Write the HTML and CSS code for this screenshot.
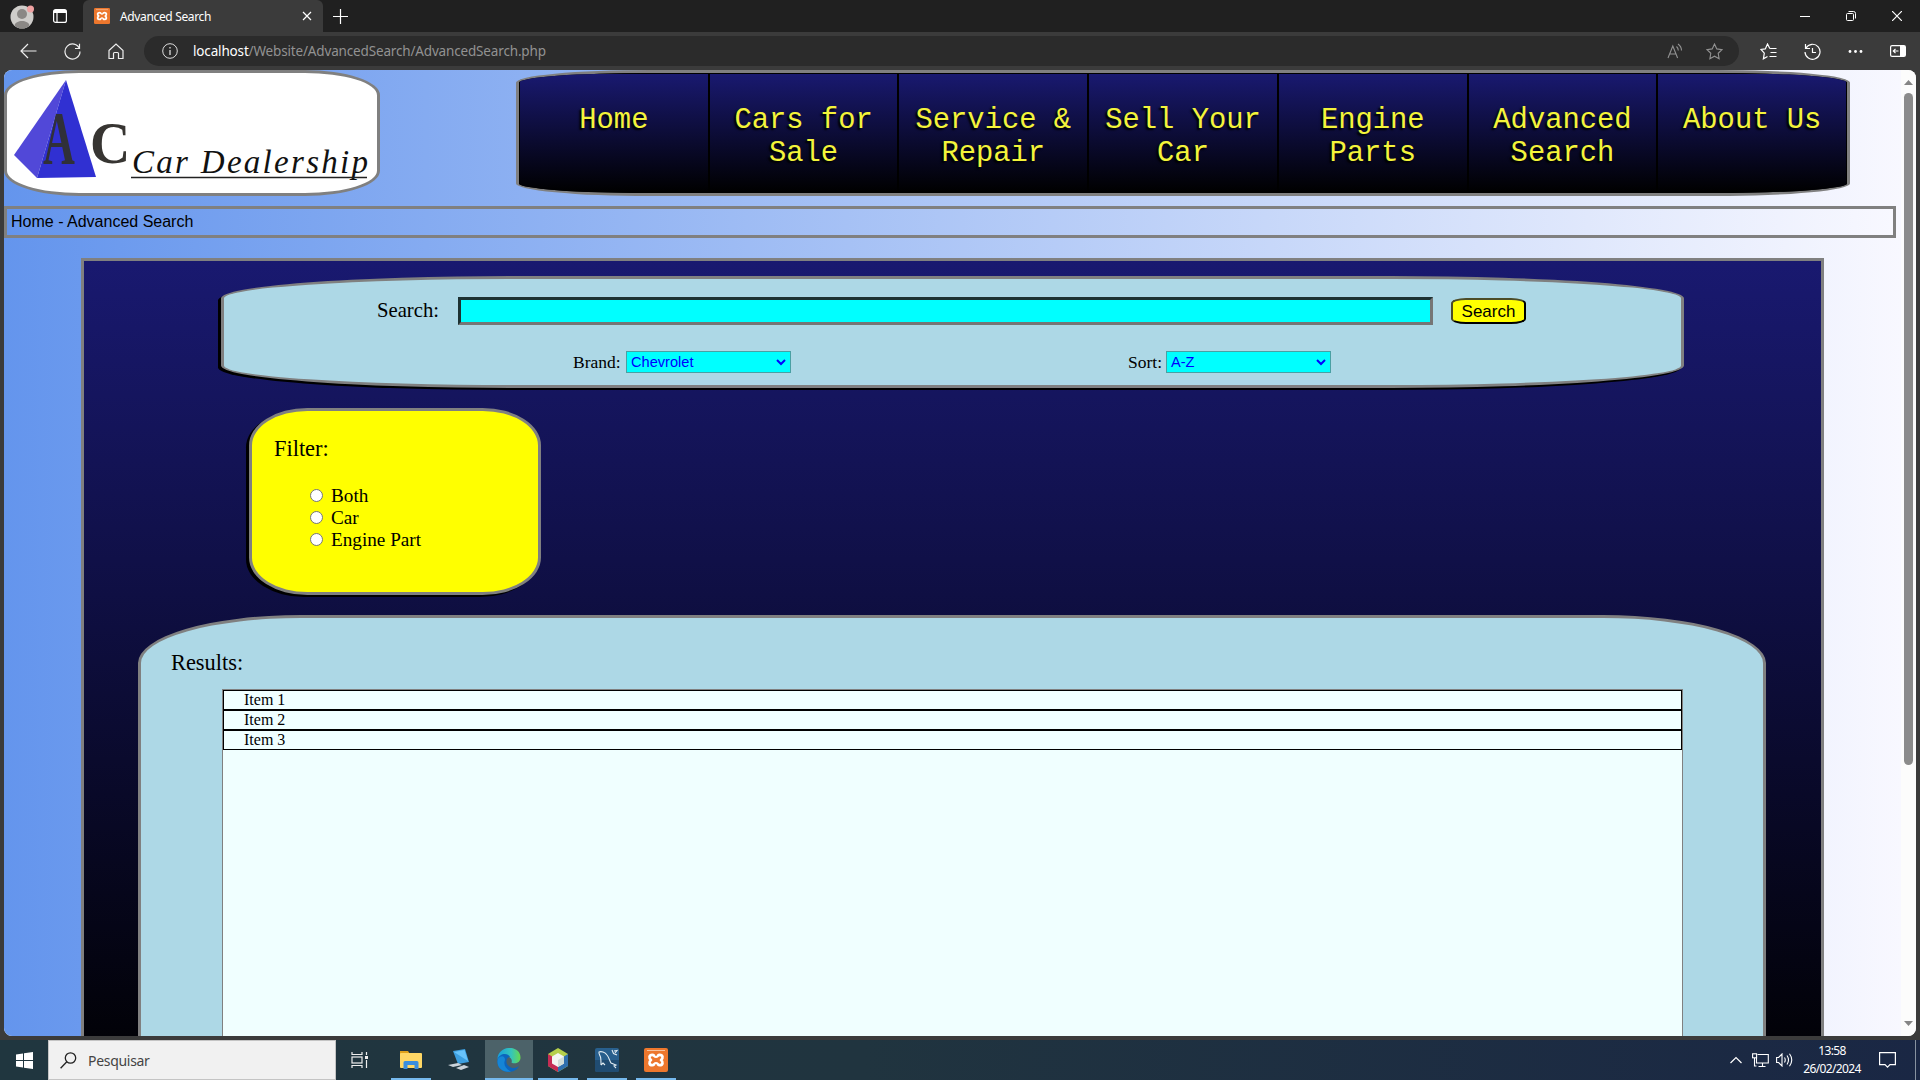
FILE: index.html
```html
<!DOCTYPE html>
<html lang="en">
<head>
<meta charset="utf-8">
<title>Advanced Search</title>
<link rel="stylesheet" href="styles.css">
</head>
<body>
<svg class="defs" width="0" height="0">
  <symbol id="xampp" viewBox="0 0 24 24">
    <rect width="24" height="24" rx="2" fill="#ed772d"/>
    <path d="M3 2.500h18" stroke="#f7c39d" stroke-width="1"/>
    <path d="M8.300 6.800c-3.200 0-3.800 3.200-1.300 5.200-2.500 2-1.900 5.200 1.300 5.200 1.900 0 1.900-1.900 3.700-1.900s1.800 1.900 3.700 1.900c3.200 0 3.800-3.200 1.300-5.200 2.500-2 1.900-5.200-1.300-5.200-1.900 0-1.900 1.900-3.700 1.900s-1.800-1.900-3.700-1.900z" fill="none" stroke="#fff" stroke-width="2.700" stroke-linejoin="round"/>
    <path d="M12 5v3M12 16v3" stroke="#ed772d" stroke-width="1.200"/>
  </symbol>
</svg>

<div class="tabbar">
  <svg class="avatar" width="24" height="28" viewBox="0 0 24 28"><circle cx="12" cy="14" r="11.500" fill="#cfcdca"/><circle cx="12" cy="11" r="5" fill="#8b8885"/><path d="M4.500 22.500c1-6 14-6 15 0-3 4-12 4-15 0z" fill="#8b8885"/><circle cx="20.500" cy="6" r="3.500" fill="#f0a2a2"/></svg>
  <svg class="workspaces" width="14" height="14" viewBox="0 0 14 14" fill="none" stroke="#fff" stroke-width="1.200"><rect x=".6" y=".6" width="12.800" height="12.800" rx="2"/><path d="M1 2.500h12" stroke-width="3"/><path d="M4 3v10"/></svg>
  <div class="tab">
    <svg width="16" height="16"><use href="#xampp"/></svg>
    <span class="tab-title">Advanced Search</span>
    <svg width="10" height="10" viewBox="0 0 10 10" stroke="#fff" stroke-width="1.200"><path d="M1 1l8 8M9 1l-8 8"/></svg>
  </div>
  <svg class="newtab" width="15" height="15" viewBox="0 0 15 15" stroke="#fff" stroke-width="1.200"><path d="M7.500 0v15M0 7.500h15"/></svg>
  <div class="window-buttons">
    <svg width="10" height="10" viewBox="0 0 10 10" stroke="#fff"><path d="M0 5.500h10"/></svg>
    <svg width="10" height="10" viewBox="0 0 10 10" fill="none" stroke="#fff"><rect x=".5" y="2.500" width="7" height="7" rx="1"/><path d="M2.500.5h5a2 2 0 0 1 2 2v5"/></svg>
    <svg width="10" height="10" viewBox="0 0 10 10" stroke="#fff" stroke-width="1.200"><path d="M0 0l10 10M10 0L0 10"/></svg>
  </div>
</div>

<div class="toolbar">
  <svg width="17" height="16" viewBox="0 0 17 16" fill="none" stroke="#eee" stroke-width="1.200"><path d="M8 1L1 8l7 7M1 8h15.500"/></svg>
  <svg width="17" height="17" viewBox="0 0 17 17" fill="none" stroke="#eee" stroke-width="1.200"><path d="M15.500 5.800A7.500 7.500 0 1 0 16 8.500M11 5.500h4.500V.8"/></svg>
  <svg width="16" height="17" viewBox="0 0 16 17" fill="none" stroke="#eee" stroke-width="1.200"><path d="M1 7.500L8 1l7 6.500v8h-4.500v-5q0-1-1-1h-3q-1 0-1 1v5H1z"/></svg>
  <div class="address">
    <svg width="16" height="16" viewBox="0 0 16 16" fill="none" stroke="#ddd"><circle cx="8" cy="8" r="7.300"/><path d="M8 7v5M8 4v1.500" stroke-width="1.300"/></svg>
    <span class="url"><b>localhost</b>/Website/AdvancedSearch/AdvancedSearch.php</span>
    <svg class="read" width="16" height="16" viewBox="0 0 16 16" fill="none" stroke="#929292" stroke-width="1.100"><path d="M1 15L5.800 3l4.800 12M2.500 11h6.500M9.500 3.500c1.300 1.200 1.800 2.500 1.800 4M11 1c2.500 1.800 3.500 4 3.500 6.500"/></svg>
    <svg width="17" height="17" viewBox="0 0 17 17" fill="none" stroke="#929292" stroke-width="1.100"><path d="M8.500 1l2.300 4.900 5.200.7-3.800 3.700.9 5.400-4.600-2.500-4.600 2.500.9-5.400L1 6.600l5.200-.7z"/></svg>
  </div>
  <div class="tools">
    <svg width="17" height="17" viewBox="0 0 17 17" fill="none" stroke="#fff" stroke-width="1.200"><path d="M11 5.500L9.700 5.300 7.500 1 5.300 5.900 1 6.500l3.300 3.700-.9 5.600L7.500 13.500M10.500 5.500h6M10.500 9.500h6M9.500 13.500h7"/></svg>
    <svg width="17" height="17" viewBox="0 0 17 17" fill="none" stroke="#fff" stroke-width="1.200"><path d="M1.500 1v4.500H6M2 5a7.500 7.500 0 1 1-1 4M8.500 5v4.500H12"/></svg>
    <svg width="15" height="17" viewBox="0 0 15 17" fill="#fff"><circle cx="2" cy="8.500" r="1.400"/><circle cx="7.500" cy="8.500" r="1.400"/><circle cx="13" cy="8.500" r="1.400"/></svg>
    <svg width="16" height="12" viewBox="0 0 16 12"><rect x=".6" y=".6" width="14.800" height="10.800" rx="1.500" fill="none" stroke="#fff" stroke-width="1.200"/><path d="M10 1h5v10h-5z" fill="#fff"/><path d="M8.500 6H3.500M5.500 3.800L3.300 6l2.200 2.200" stroke="#fff" fill="none" stroke-width="1.200"/></svg>
  </div>
</div>

<div class="viewport">
  <div class="page">
    <header>
      <div class="logo">
        <svg width="370" height="120" viewBox="7 73 370 120">
          <path d="M66 80L14 155l23 23z" fill="#5148d8"/>
          <path d="M66 80L37 178l59-1z" fill="#3030d2"/>
          <g font-family="Liberation Serif, serif">
            <text transform="translate(43 164) scale(.58 1)" font-size="76" font-weight="bold" fill="#303039">A</text>
            <text transform="translate(90 163) scale(.93 1)" font-size="60" font-weight="bold" fill="#373532">C</text>
            <text x="132" y="173" font-size="33" font-style="italic" fill="#111" textLength="236" lengthAdjust="spacing">Car Dealership</text>
          </g>
          <path d="M131 177.500h236" stroke="#222" stroke-width="1.600"/>
        </svg>
      </div>
      <nav>
        <a>Home</a><a>Cars for<br>Sale</a><a>Service &amp;<br>Repair</a><a>Sell Your<br>Car</a><a>Engine<br>Parts</a><a>Advanced<br>Search</a><a>About Us</a>
      </nav>
    </header>
    <div class="crumbs">Home - Advanced Search</div>
    <main>
      <section class="search">
        <div class="row query"><label>Search:</label><div class="field"></div><button>Search</button></div>
        <div class="row options">
          <label>Brand:</label><div class="select"><span>Chevrolet</span><svg width="10" height="7" viewBox="0 0 10 7" fill="none" stroke="#00f" stroke-width="2"><path d="M1 1l4 4 4-4"/></svg></div>
          <label class="sort">Sort:</label><div class="select"><span>A-Z</span><svg width="10" height="7" viewBox="0 0 10 7" fill="none" stroke="#00f" stroke-width="2"><path d="M1 1l4 4 4-4"/></svg></div>
        </div>
      </section>
      <section class="filter">
        <div class="heading">Filter:</div>
        <div class="choices">
          <div class="choice"><i></i>Both</div>
          <div class="choice"><i></i>Car</div>
          <div class="choice"><i></i>Engine Part</div>
        </div>
      </section>
      <section class="results">
        <div class="heading">Results:</div>
        <div class="list">
          <div class="item">Item 1</div>
          <div class="item">Item 2</div>
          <div class="item">Item 3</div>
        </div>
      </section>
    </main>
  </div>
  <div class="scrollbar">
    <svg width="9" height="5" viewBox="0 0 9 5" fill="#858585"><path d="M0 5L4.500 0 9 5z"/></svg>
    <div class="thumb"></div>
    <svg class="down" width="9" height="5" viewBox="0 0 9 5" fill="#858585"><path d="M0 0l4.500 5L9 0z"/></svg>
  </div>
</div>

<div class="taskbar">
  <div class="start"><svg width="17" height="17" viewBox="0 0 17 17" fill="#fff"><path d="M0 2.400l7-1V8H0zM8 1.200L17 0v8H8zM0 9h7v6.600l-7-1zM8 9h9v8l-9-1.200z"/></svg></div>
  <div class="tasksearch"><svg width="17" height="17" viewBox="0 0 17 17" fill="none" stroke="#222" stroke-width="1.300"><circle cx="10.500" cy="6" r="5.200"/><path d="M6.800 9.800L.6 16.300"/></svg><span>Pesquisar</span></div>
  <div class="app view"><svg width="18" height="16" viewBox="0 0 18 16" fill="none" stroke="#eee" stroke-width="1.200"><path d="M1 0v2.500h10V0M1 16v-2.500h10V16M15.500 0v3M15.500 8v8"/><rect x="1" y="5" width="10" height="6"/><path d="M14 5.500h3" stroke-width="3"/></svg></div>
  <div class="app open explorer"><svg width="22" height="20" viewBox="0 0 22 20"><path d="M0 1h8l2 3H0z" fill="#e0a21b"/><rect y="3" width="22" height="15" rx="1" fill="#ffd765"/><path d="M3.500 19v-6.500q0-1.500 1.500-1.500h12q1.500 0 1.500 1.500V19h-4v-4h-7v4z" fill="#3a8ede"/></svg></div>
  <div class="app remote"><svg width="24" height="24" viewBox="0 0 24 24"><path d="M6 3l12-2 4 13-11 2z" fill="#3d9fe0"/><path d="M7 4l10.500-2 3.500 11z" fill="#68c3fa"/><path d="M1 17l10-2 4 2-9 2zM9 20l8-3 5 2-8 3z" fill="#cbd3da"/></svg></div>
  <div class="app open edge"><svg width="24" height="24" viewBox="0 0 24 24"><defs><linearGradient id="eg" x1="0" x2="1"><stop offset="0" stop-color="#169edc"/><stop offset=".6" stop-color="#35c4bb"/><stop offset="1" stop-color="#66d94e"/></linearGradient></defs><path d="M.5 11C1-3.500 23.500-3.500 23.500 9.500c0 5.500-6 7-9 5 2.500-5.500-9-10-14-3.500z" fill="url(#eg)"/><path d="M.5 12C2 5 11 4.500 13 9c-4 0-6 7.500 1 10.500 3 1.200 6 .2 8-1.500C17 28-1 25 .5 12z" fill="#0c64bd"/><path d="M8 12c-2 5 1 9.500 6 11.400C5 25-1 19 .8 11 3 7.500 8 7 8 12z" fill="#1585d6"/></svg></div>
  <div class="app open netbeans"><svg width="22" height="24" viewBox="0 0 22 24"><path d="M11 0l10 6v12l-10 6-10-6V6z" fill="#b5cf4b"/><path d="M1 6l10 6v12L1 18z" fill="#c52c54"/><path d="M21 6l-10 6v12l10-6z" fill="#2f6fae"/><path d="M11 5l6 3.500v7L11 19l-6-3.500v-7z" fill="#f3f5f2"/><path d="M11 12l6-3.500v7L11 19z" fill="#d2ddd8"/></svg></div>
  <div class="app open mysql"><svg width="24" height="24" viewBox="0 0 24 24"><rect width="24" height="24" rx="2" fill="#285f8d"/><path d="M0 12h24v10q0 2-2 2H2q-2 0-2-2z" fill="#204c72"/><path d="M6 17C6 14 6 11 5.500 9 4.500 6.500 3.500 5 4 4c2-1 6 0 8 3 2 2.500 2.500 5.500 4 8l5 2-2 1 2 2M6 17l2-2 2 2M17 2l1.500 3.500L22 7M19 3l3-.5-2 2.500" fill="none" stroke="#e3edf3" stroke-width="1.100"/></svg></div>
  <div class="app open xamppapp"><svg width="24" height="24"><use href="#xampp"/></svg></div>
  <div class="tray">
    <svg width="12" height="8" viewBox="0 0 12 8" fill="none" stroke="#fff" stroke-width="1.200"><path d="M.5 7L6 1.500 11.500 7"/></svg>
    <svg class="net" width="17" height="15" viewBox="0 0 17 15" fill="none" stroke="#fff" stroke-width="1.100"><path d="M5.500 1.500h10.800v8.500H4.500V5M10.500 10v3M6.500 13.500h7"/><rect x=".6" y=".8" width="4" height="4"/><path d="M2.500 5v8h2"/></svg>
    <svg class="vol" width="17" height="14" viewBox="0 0 17 14" fill="none" stroke="#fff" stroke-width="1.100"><path d="M.6 4.500h2L6 1v12L2.600 9.500h-2zM8.500 4.500q1.500 2.500 0 5M11 2.500q3 4.500 0 9M13.500.8q4.500 6.200 0 12.400"/></svg>
    <div class="clock"><span>13:58</span><span>26/02/2024</span></div>
    <svg class="note" width="17" height="17" viewBox="0 0 17 17" fill="none" stroke="#fff" stroke-width="1.200"><path d="M.6.6h15.800v12H11L8.500 15.200 6 12.600H.6z"/></svg>
  </div>
</div>
</body>
</html>
```
FILE: styles.css
```css
* { box-sizing: border-box; }
body { margin: 0; width: 1920px; height: 1080px; overflow: hidden; display: flex; flex-direction: column; background: #3b3b3b; font-family: "Liberation Serif", serif; color: #000; }
svg { display: block; flex: none; }
.defs { display: none; }

/* Browser chrome */
.tabbar { height: 32px; flex: none; display: flex; align-items: center; background: #202020; font-family: "Noto Sans", sans-serif; }
.avatar { margin-left: 10px; margin-top: 2px; }
.workspaces { margin-left: 19px; margin-right: 16px; }
.tab { width: 240px; height: 32px; background: #3b3b3b; border-radius: 6px 6px 0 0; display: flex; align-items: center; padding: 0 11px; color: #fff; font-size: 12px; }
.tab-title { margin-left: 10px; letter-spacing: -.35px; flex: 1; }
.newtab { margin-left: 10px; }
.window-buttons { margin-left: auto; margin-right: 18px; display: flex; gap: 36px; }
.toolbar { height: 38px; flex: none; display: flex; align-items: center; padding: 0 14px 0 20px; background: #3b3b3b; }
.toolbar > svg { margin-right: 27px; }
.toolbar > svg + svg + svg { margin-right: 20px; }
.address { width: 1595px; height: 30px; border-radius: 15px; background: #2b2b2b; display: flex; align-items: center; padding: 0 16px 0 18px; }
.url { margin-left: 15px; font: 13.500px "Noto Sans", sans-serif; color: #929292; width: 353px; white-space: nowrap; letter-spacing: -.16px; }
.url b { font-weight: 400; color: #fff; }
.read { margin-left: auto; margin-right: 23px; }
.tools { margin-left: auto; display: flex; align-items: center; gap: 27px; }

/* Website */
.viewport { margin-left: 4px; width: 1912px; height: 966px; flex: none; display: flex; border-radius: 8px; overflow: hidden; background: #fcfcfc; }
.page { width: 1897px; background: linear-gradient(to right, cornflowerblue, ghostwhite); overflow: hidden; }
header { display: flex; height: 126px; }
.logo { width: 376px; border: 3px solid gray; border-radius: 20%; background: #fff; overflow: hidden; }
nav { margin-left: 136px; width: 1334px; border: 3px solid gray; border-radius: 10%; overflow: hidden; display: flex; background: #000; }
nav a { flex: 1 1 0; border: 1px solid #000; background: linear-gradient(midnightblue, #000); color: #f4f43a; font: 28.800px/33px "Liberation Mono", monospace; text-align: center; padding-top: 30px; text-shadow: -2px 2px 2px #000; white-space: nowrap; }
.crumbs { margin-top: 10px; width: 1892px; height: 32px; border: 3px solid gray; padding-left: 4px; font: 16px/25px "Liberation Sans", sans-serif; background: linear-gradient(to right, cornflowerblue, ghostwhite); }
main { margin: 20px 0 0 77px; width: 1743px; height: 838px; border: 3px solid gray; background: linear-gradient(midnightblue, #000); display: flex; flex-direction: column; align-items: flex-start; }
.search { margin: 15px 0 0 137px; width: 1463px; height: 112px; flex: none; border: 3px solid gray; border-radius: 20%; background: lightblue; box-shadow: -3px 2px #000; padding-top: 18px; }
.row { display: flex; align-items: center; }
.query { height: 28px; padding-left: 153px; font-size: 20.700px; }
.query label { width: 81px; margin-top: -1px; }
.field { width: 975px; height: 28px; background: cyan; border: 3px solid; border-color: #1d3233 #767676 #767676 #1d3233; }
.query button { margin-left: 18px; width: 75px; height: 26px; padding: 1px 0 0; border: 2px outset #000; border-color: #4c4c28 #000 #000 #4c4c28; border-radius: 20%; background: yellow; font: 17px "Liberation Sans", sans-serif; color: #000; }
.options { height: 22px; margin-top: 26px; padding-left: 349px; font-size: 17.500px; }
.options label { width: 53px; }
.options .sort { margin-left: 337px; width: 38px; }
.select { width: 165px; height: 22px; background: cyan; border: 1px solid #4aa0a3; color: #00f; font: 14.600px "Liberation Sans", sans-serif; display: flex; align-items: center; justify-content: space-between; padding: 0 4px; }
.filter { margin: 20px 0 0 165px; width: 292px; height: 187px; flex: none; border: 3px solid gray; border-radius: 20%; background: yellow; box-shadow: -3px 2px #000; padding: 25px 0 0 22px; }
.heading { font-size: 22.400px; line-height: 26px; }
.choices { margin: 23px 0 0 36px; }
.choice { display: flex; align-items: center; height: 22px; font-size: 19.200px; }
.choice i { width: 13px; height: 13px; margin-top: -1px; border: 1px solid #767676; border-radius: 50%; background: #fff; margin-right: 8px; }
.results { margin: 20px 0 0 54px; width: 1628px; height: 480px; flex: none; border: 3px solid gray; border-radius: 10%; background: lightblue; padding-top: 32px; }
.results .heading { margin-left: 30px; }
.list { margin: 13px 0 0 81px; width: 1461px; height: 390px; border: 1px solid gray; background: azure; }
.item { height: 20px; border: 1px solid #000; padding-left: 20px; font-size: 16px; line-height: 18px; }
.scrollbar { width: 15px; padding: 10px 3px 10px; display: flex; flex-direction: column; align-items: center; background: #fcfcfc; }
.thumb { width: 9px; height: 672px; margin-top: 8px; border-radius: 5px; background: #8b8b8b; }
.down { margin-top: auto; }

/* Desktop taskbar */
.taskbar { margin-top: 4px; height: 40px; flex: none; display: flex; background: linear-gradient(to right, #20363f, #20343f 45%, #1a2744); font-family: "Noto Sans", sans-serif; color: #fff; }
.start { width: 48px; display: flex; align-items: center; justify-content: center; }
.tasksearch { width: 288px; background: #f1f1f1; border: 1px solid #c4c4c4; display: flex; align-items: center; gap: 11px; padding-left: 11px; color: #444; font-size: 14px; letter-spacing: -.3px; }
.app { display: flex; align-items: center; justify-content: center; width: 40px; margin-left: 9px; }
.app.open { box-shadow: inset 0 -2px #76b9ed; }
.app.view { width: 48px; margin-left: 0; }
.app.explorer { margin-left: 7px; }
.app.remote { margin-left: 8px; }
.app.edge { width: 48px; margin-left: 6px; background: #4c6269; }
.app.netbeans { margin-left: 5px; }
.tray { margin-left: auto; margin-right: 4px; border-right: 1px solid #8792a0; padding-right: 19px; display: flex; align-items: center; }
.net { margin-left: 10px; }
.vol { margin-left: 7px; }
.clock { width: 60px; margin-left: 9px; display: flex; flex-direction: column; align-items: center; font-size: 12px; line-height: 18px; letter-spacing: -.65px; white-space: nowrap; }
.note { margin-left: 17px; }
```
